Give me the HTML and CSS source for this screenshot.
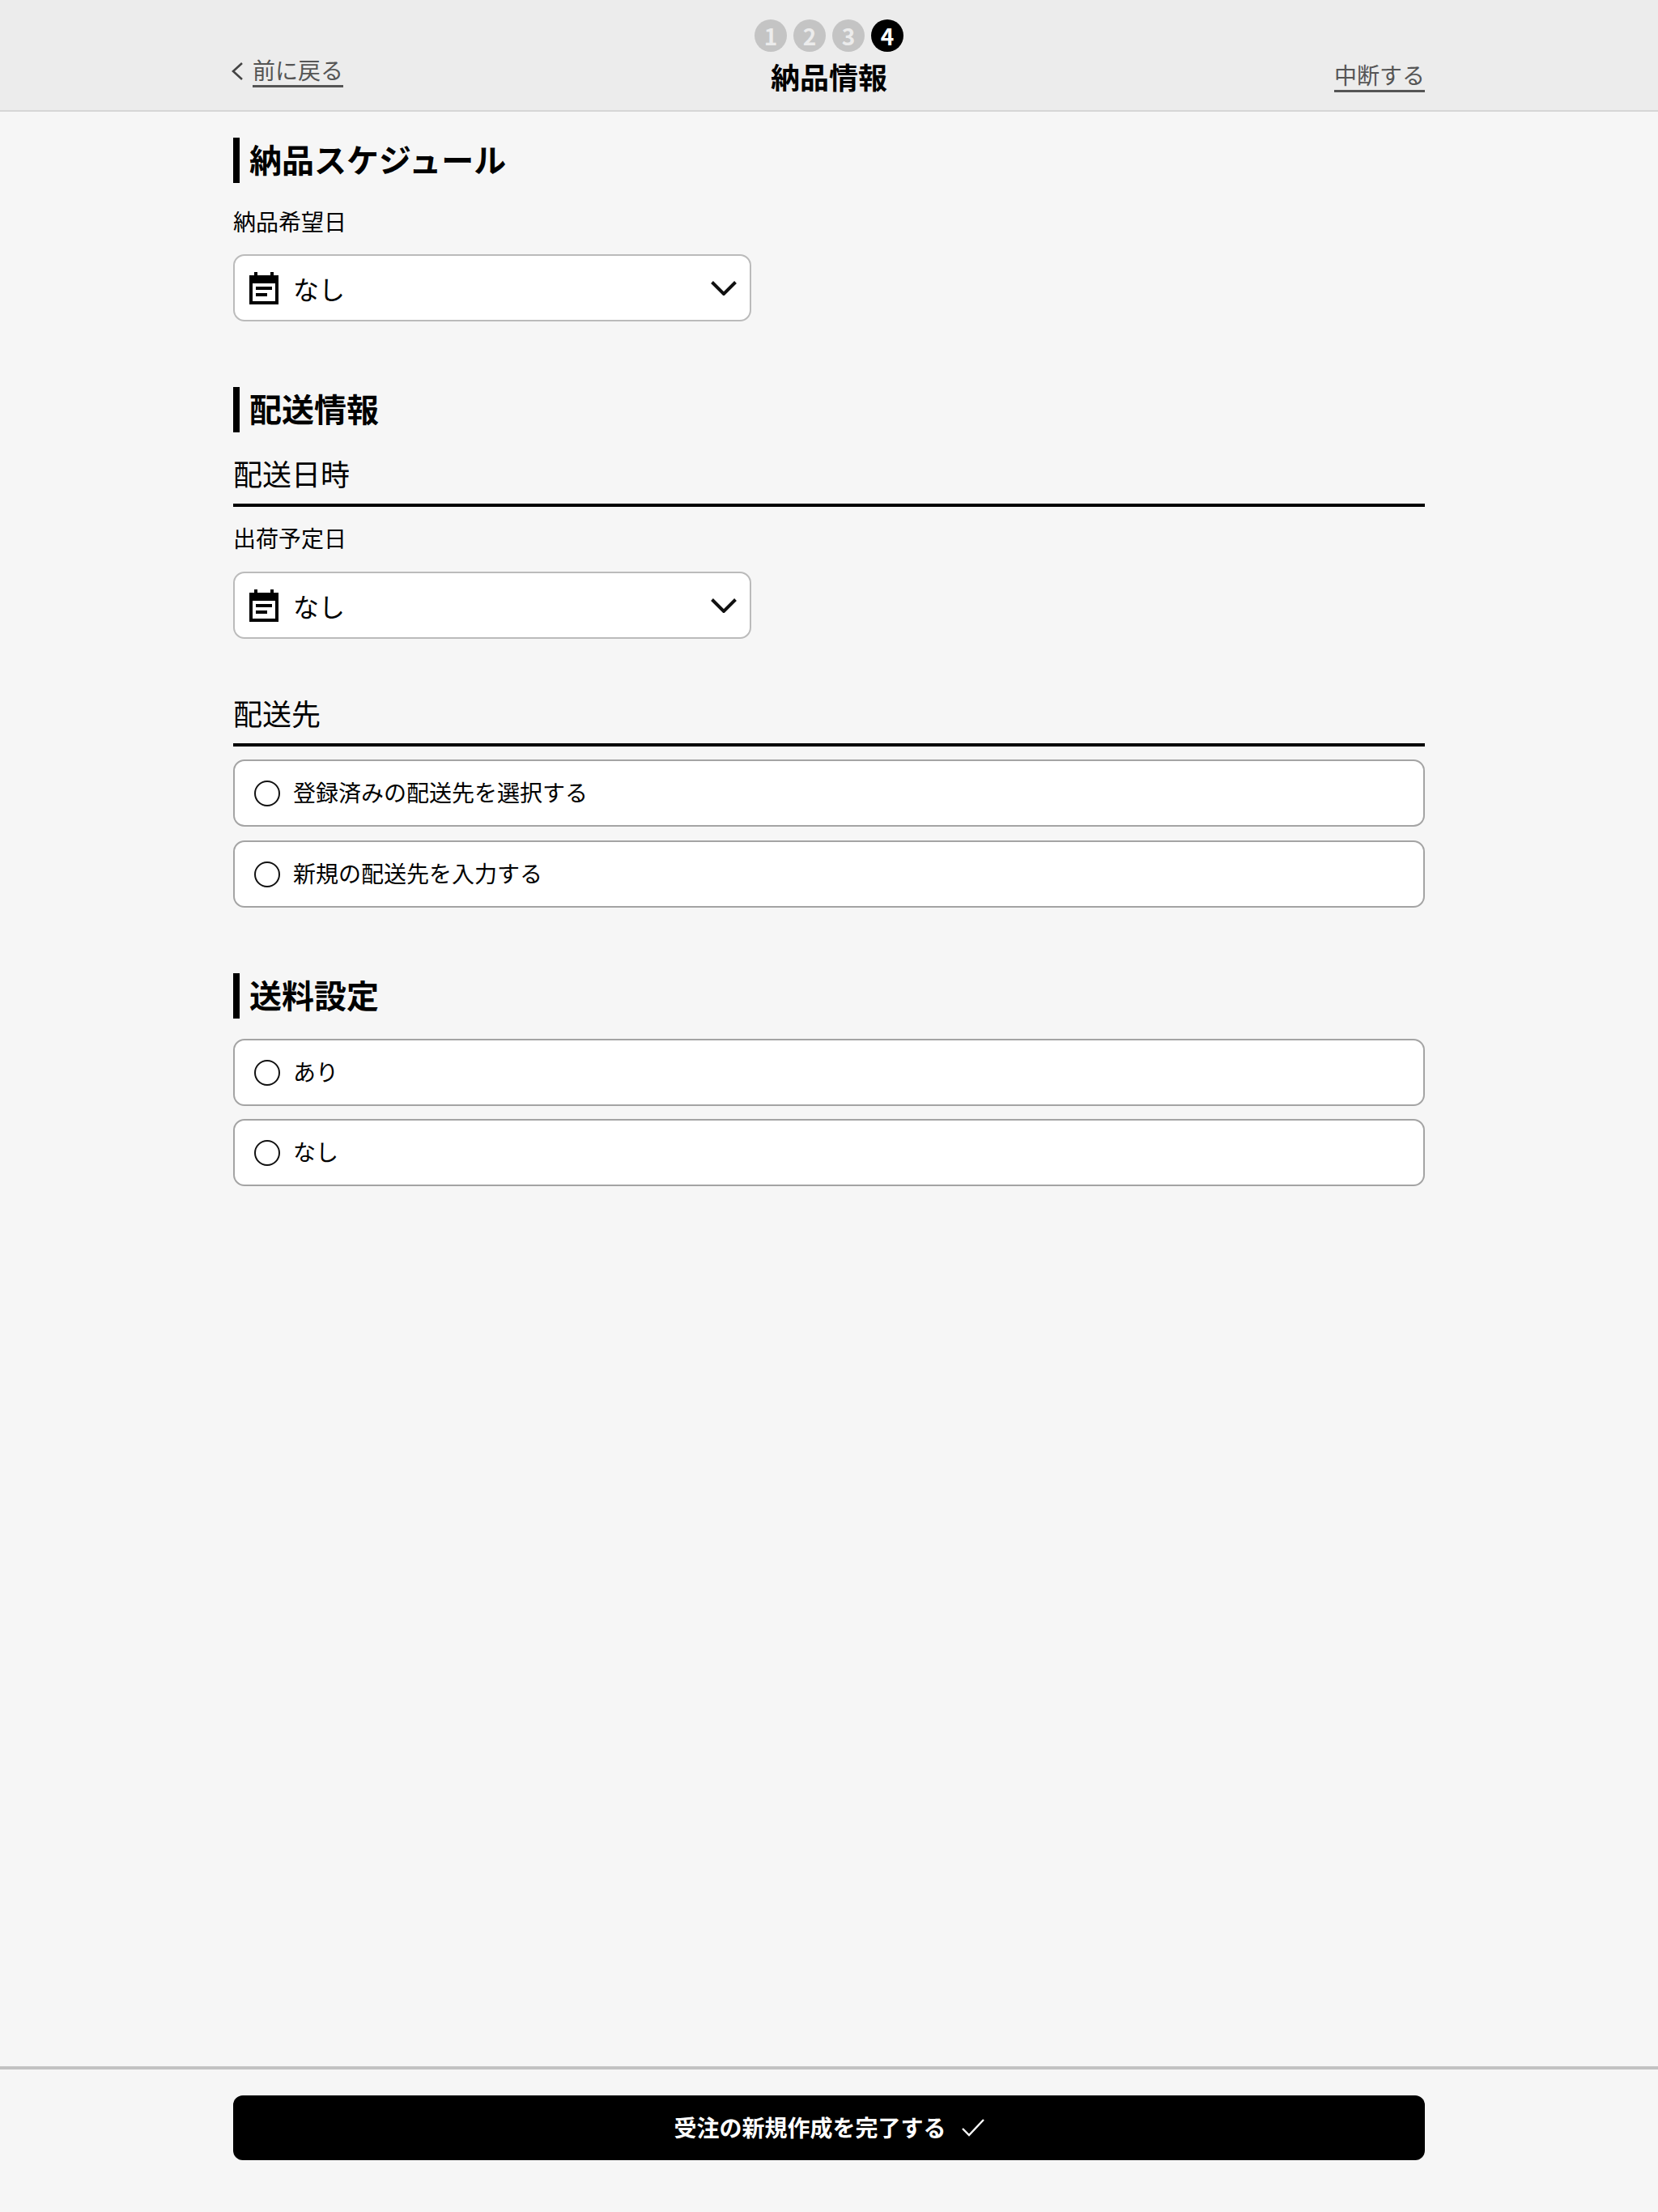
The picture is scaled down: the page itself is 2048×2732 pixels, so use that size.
FILE: index.html
```html
<!DOCTYPE html>
<html lang="ja">
<head>
    <meta charset="UTF-8">
    <meta name="viewport" content="width=device-width, initial-scale=1.0">
    <title>納品情報</title>
    <link rel="stylesheet" href="styles.css">
</head>
<body>

    <header class="topbar">
        <a class="back-link" href="#">
            <svg class="back-icon" viewBox="0 0 16 24" width="16" height="24"><path d="M14 2 3 12l11 10" fill="none" stroke="#444" stroke-width="2.6"/></svg>
            <span class="link-text">前に戻る</span>
        </a>
        <div class="topbar-center">
            <ol class="steps">
                <li class="step">1</li>
                <li class="step">2</li>
                <li class="step">3</li>
                <li class="step step-current">4</li>
            </ol>
            <h1 class="page-title">納品情報</h1>
        </div>
        <a class="quit-link" href="#"><span class="link-text">中断する</span></a>
    </header>

    <main class="content">
        <!-- 納品スケジュール -->
        <section class="section">
            <h2 class="section-title">納品スケジュール</h2>
            <p class="field-label">納品希望日</p>
            <div class="date-select">
                <svg class="calendar-icon" viewBox="0 0 24 24" width="48" height="48"><path d="M17 10H7v2h10v-2zm2-7h-1V1h-2v2H8V1H6v2H3v18h18V3h-2zm0 16H5V8h14v11zM14 14H7v2h7v-2z"/></svg>
                <span class="date-value">なし</span>
                <svg class="chevron-icon" viewBox="0 0 32 18" width="32" height="18"><path d="M1.5 1.5 16 16 30.5 1.5" fill="none" stroke="#111" stroke-width="4"/></svg>
            </div>
        </section>

        <!-- 配送情報 -->
        <section class="section">
            <h2 class="section-title">配送情報</h2>
            <h3 class="sub-title">配送日時</h3>
            <p class="field-label">出荷予定日</p>
            <div class="date-select">
                <svg class="calendar-icon" viewBox="0 0 24 24" width="48" height="48"><path d="M17 10H7v2h10v-2zm2-7h-1V1h-2v2H8V1H6v2H3v18h18V3h-2zm0 16H5V8h14v11zM14 14H7v2h7v-2z"/></svg>
                <span class="date-value">なし</span>
                <svg class="chevron-icon" viewBox="0 0 32 18" width="32" height="18"><path d="M1.5 1.5 16 16 30.5 1.5" fill="none" stroke="#111" stroke-width="4"/></svg>
            </div>

            <h3 class="sub-title sub-title-next">配送先</h3>
            <div class="radio-list">
                <label class="radio-row"><input type="radio" name="destination"><span>登録済みの配送先を選択する</span></label>
                <label class="radio-row"><input type="radio" name="destination"><span>新規の配送先を入力する</span></label>
            </div>
        </section>

        <!-- 送料設定 -->
        <section class="section">
            <h2 class="section-title section-title-tight">送料設定</h2>
            <div class="radio-list">
                <label class="radio-row"><input type="radio" name="shipping"><span>あり</span></label>
                <label class="radio-row"><input type="radio" name="shipping"><span>なし</span></label>
            </div>
        </section>
    </main>

    <footer class="bottombar">
        <button class="submit-button" type="button">
            <span class="submit-text">受注の新規作成を完了する</span>
            <svg viewBox="0 0 28 22" width="28" height="22"><path d="M1 12l8 8L27 1" fill="none" stroke="#fff" stroke-width="2.4"/></svg>
        </button>
    </footer>

</body>
</html>
```

FILE: styles.css
```css
* {
    box-sizing: border-box;
}

body {
    display: flex;
    flex-direction: column;
    min-height: 100vh;
    margin: 0;
    background-color: #f6f6f6;
    color: #000;
    font-family: "Noto Sans CJK JP", "Noto Sans", sans-serif;
}

/* Top bar */
.topbar {
    display: grid;
    grid-template-columns: 1fr auto 1fr;
    height: 138px;
    padding: 0 288px;
    background-color: #ececec;
    border-bottom: 2px solid #d6d6d6;
}

.back-link,
.quit-link {
    display: flex;
    align-items: flex-start;
    color: #555;
    font-size: 28px;
    line-height: 38px;
    text-decoration: none;
}

.back-link {
    gap: 11px;
    margin-left: -3px;
    padding-top: 67px;
}

.back-icon {
    margin-top: 9px;
}

.quit-link {
    justify-content: flex-end;
    padding-top: 73px;
}

.link-text {
    display: block;
    border-bottom: 3px solid #555;
}

.topbar-center {
    display: flex;
    flex-direction: column;
    align-items: center;
    padding-top: 24px;
}

.steps {
    display: flex;
    gap: 8px;
    margin: 0;
    padding: 0;
    list-style: none;
}

.step {
    width: 40px;
    height: 40px;
    border-radius: 50%;
    background-color: #c4c4c4;
    color: #ececec;
    font-size: 28px;
    font-weight: 700;
    line-height: 40px;
    text-align: center;
}

.step-current {
    background-color: #000;
    color: #fff;
}

.page-title {
    margin: 4px 0 0;
    font-size: 36px;
    font-weight: 700;
    line-height: 52px;
}

/* Content */
.content {
    flex: 1;
    padding: 32px 288px 0;
}

.section {
    margin-bottom: 81px;
}

.section-title {
    margin: 0;
    padding: 0 0 4px 12px;
    border-left: 8px solid #000;
    font-size: 40px;
    font-weight: 700;
    line-height: 52px;
}

.section-title-tight {
    margin-bottom: 25px;
}

.sub-title {
    margin: 28px 0 0;
    padding-bottom: 16px;
    border-bottom: 4px solid #000;
    font-size: 36px;
    font-weight: 400;
    line-height: 44px;
}

.sub-title-next {
    margin-top: 69px;
}

.field-label {
    margin: 27px 0 21px;
    font-size: 28px;
    line-height: 40px;
}

.sub-title + .field-label {
    margin: 18px 0 22px;
}

.date-select {
    display: flex;
    align-items: center;
    gap: 12px;
    width: 640px;
    height: 83px;
    padding: 0 16px 0 12px;
    background-color: #fff;
    border: 2px solid #bbb;
    border-radius: 14px;
}

.calendar-icon {
    margin-top: 4px;
}

.date-value {
    font-size: 32px;
    line-height: 44px;
}

.chevron-icon {
    margin-left: auto;
}

.radio-list {
    display: flex;
    flex-direction: column;
    gap: 17px;
}

.sub-title + .radio-list {
    margin-top: 16px;
}

.section-title-tight + .radio-list {
    gap: 16px;
}

.radio-row {
    display: flex;
    align-items: center;
    gap: 16px;
    height: 83px;
    padding: 0 24px;
    background-color: #fff;
    border: 2px solid #a4a4a4;
    border-radius: 14px;
    font-size: 28px;
    line-height: 40px;
}

.radio-row input {
    appearance: none;
    width: 32px;
    height: 32px;
    margin: 0;
    background-color: #fff;
    border: 2px solid #111;
    border-radius: 50%;
}

.radio-row span {
    margin-bottom: 4px;
}

/* Bottom bar */
.bottombar {
    padding: 32px 288px 64px;
    border-top: 4px solid #c2c2c2;
}

.submit-button {
    display: flex;
    align-items: center;
    justify-content: center;
    gap: 19px;
    width: 100%;
    height: 80px;
    padding: 0;
    background-color: #000;
    border: none;
    border-radius: 12px;
    color: #fff;
    font-family: inherit;
    font-size: 28px;
    font-weight: 700;
    cursor: pointer;
}

.submit-text {
    margin-bottom: 3px;
}
```
